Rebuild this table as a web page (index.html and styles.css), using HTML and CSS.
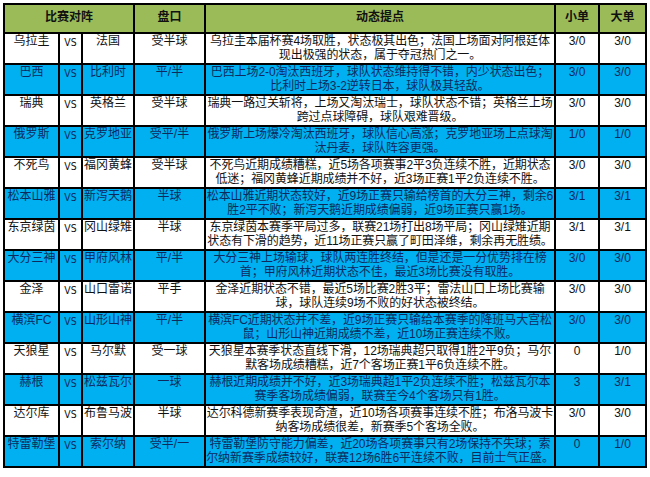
FILE: index.html
```html
<!DOCTYPE html>
<html lang="zh">
<head>
<meta charset="utf-8">
<title>比赛对阵</title>
<link rel="stylesheet" href="styles.css">
</head>
<body>
<table class="sheet">
  <colgroup>
    <col class="c-t1"><col class="c-vs"><col class="c-t2"><col class="c-pk"><col class="c-desc"><col class="c-s"><col class="c-b">
  </colgroup>
  <thead>
    <tr class="head">
      <th colspan="3">比赛对阵</th>
      <th>盘口</th>
      <th>动态提点</th>
      <th>小单</th>
      <th>大单</th>
    </tr>
  </thead>
  <tbody>
    <tr class="w">
      <td>乌拉圭</td><td class="vs">VS</td><td>法国</td><td>受半球</td>
      <td class="desc">乌拉圭本届杯赛4场取胜，状态极其出色；法国上场面对阿根廷体<br>现出极强的状态，属于夺冠热门之一。</td>
      <td>3/0</td><td>3/0</td>
    </tr>
    <tr class="b">
      <td>巴西</td><td class="vs">VS</td><td>比利时</td><td>平/半</td>
      <td class="desc">巴西上场2-0淘汰西班牙，球队状态维持得不错，内少状态出色；<br>比利时上场3-2逆转日本，球队极其轻敌。</td>
      <td>3/0</td><td>3/0</td>
    </tr>
    <tr class="w">
      <td>瑞典</td><td class="vs">VS</td><td>英格兰</td><td>受半球</td>
      <td class="desc">瑞典一路过关斩将，上场又淘汰瑞士，球队状态不错；英格兰上场<br>跨过点球障碍，球队艰难晋级。</td>
      <td>3/0</td><td>3/0</td>
    </tr>
    <tr class="b">
      <td>俄罗斯</td><td class="vs">VS</td><td>克罗地亚</td><td>受平/半</td>
      <td class="desc">俄罗斯上场爆冷淘汰西班牙，球队信心高涨；克罗地亚场上点球淘<br>汰丹麦，球队阵容更强。</td>
      <td>1/0</td><td>1/0</td>
    </tr>
    <tr class="w">
      <td>不死鸟</td><td class="vs">VS</td><td>福冈黄蜂</td><td>受半球</td>
      <td class="desc">不死鸟近期成绩糟糕，近5场各项赛事2平3负连续不胜，近期状态<br>低迷；福冈黄蜂近期成绩并不好，近3场正赛1平2负连续不胜。</td>
      <td>3/0</td><td>3/0</td>
    </tr>
    <tr class="b">
      <td>松本山雅</td><td class="vs">VS</td><td>新泻天鹅</td><td>半球</td>
      <td class="desc">松本山雅近期状态较好，近9场正赛只输给榜首的大分三神，剩余6<br>胜2平不败；新泻天鹅近期成绩偏弱，近9场正赛只赢1场。</td>
      <td>3/1</td><td>3/1</td>
    </tr>
    <tr class="w">
      <td>东京绿茵</td><td class="vs">VS</td><td>冈山绿雉</td><td>半球</td>
      <td class="desc">东京绿茵本赛季平局过多，联赛21场打出8场平局；冈山绿雉近期<br>状态有下滑的趋势，近11场正赛只赢了町田泽维，剩余再无胜绩。</td>
      <td>3/1</td><td>3/1</td>
    </tr>
    <tr class="b">
      <td>大分三神</td><td class="vs">VS</td><td>甲府风林</td><td>平/半</td>
      <td class="desc">大分三神上场输球，球队两连胜终结，但是还是一分优势排在榜<br>首；甲府风林近期状态不佳，最近3场比赛没有取胜。</td>
      <td>3/0</td><td>3/0</td>
    </tr>
    <tr class="w">
      <td>金泽</td><td class="vs">VS</td><td>山口雷诺</td><td>平手</td>
      <td class="desc">金泽近期状态不错，最近5场比赛2胜3平；雷法山口上场比赛输<br>球，球队连续9场不败的好状态被终结。</td>
      <td>3/0</td><td>3/0</td>
    </tr>
    <tr class="b">
      <td>横滨FC</td><td class="vs">VS</td><td>山形山神</td><td>平/半</td>
      <td class="desc">横滨FC近期状态并不差，近9场正赛只输给本赛季的降班马大宫松<br>鼠；山形山神近期成绩不差，近10场正赛连续不败。</td>
      <td>3/0</td><td>3/0</td>
    </tr>
    <tr class="w">
      <td>天狼星</td><td class="vs">VS</td><td>马尔默</td><td>受一球</td>
      <td class="desc">天狼星本赛季状态直线下滑，12场瑞典超只取得1胜2平9负；马尔<br>默客场成绩糟糕，近7个客场正赛1平6负连续不胜。</td>
      <td>0</td><td>1/0</td>
    </tr>
    <tr class="b">
      <td>赫根</td><td class="vs">VS</td><td>松兹瓦尔</td><td>一球</td>
      <td class="desc">赫根近期成绩并不好，近3场瑞典超1平2负连续不胜；松兹瓦尔本<br>赛季客场成绩偏弱，联赛至今4个客场只有1胜。</td>
      <td>3</td><td>3/1</td>
    </tr>
    <tr class="w">
      <td>达尔库</td><td class="vs">VS</td><td>布鲁马波</td><td>半球</td>
      <td class="desc">达尔科德新赛季表现奇渣，近10场各项赛事连续不胜；布洛马波卡<br>纳客场成绩很差，新赛季5个客场全败。</td>
      <td>3/0</td><td>3/0</td>
    </tr>
    <tr class="b">
      <td>特雷勒堡</td><td class="vs">VS</td><td>索尔纳</td><td>受半/一</td>
      <td class="desc">特雷勒堡防守能力偏差，近20场各项赛事只有2场保持不失球；索<br>尔纳新赛季成绩较好，联赛12场6胜6平连续不败，目前士气正盛。</td>
      <td>0</td><td>1/0</td>
    </tr>
  </tbody>
</table>
</body>
</html>
```

FILE: styles.css
```css
html, body {
  margin: 0;
  padding: 0;
  background: #ffffff;
}

body {
  padding: 3px 0 0 3px;
  font-family: "Liberation Sans", "Noto Sans CJK SC", sans-serif;
  font-size: 12px;
  color: #111111;
}

.sheet {
  border-collapse: collapse;
  table-layout: fixed;
  width: 642px;
  border: 2px solid #000;
}

.c-t1 { width: 55px; }
.c-vs { width: 23px; }
.c-t2 { width: 52px; }
.c-pk { width: 71px; }
.c-desc { width: 350px; }
.c-s { width: 44px; }
.c-b { width: 47px; }

.sheet th,
.sheet td {
  border: 2px solid #000;
  padding: 0;
  text-align: center;
  white-space: nowrap;
  overflow: hidden;
}

.head {
  height: 29px;
  background: #9bbb59;
}

.head th {
  font-weight: bold;
  font-size: 12px;
  line-height: 14px;
  vertical-align: middle;
  padding-bottom: 3px;
  color: #111;
}

tbody tr {
  height: 31px;
}

tbody td {
  vertical-align: top;
  line-height: 14px;
  padding-top: 1px;
}

tbody td.vs {
  font-size: 11px;
  font-family: "DejaVu Sans", sans-serif;
  transform: scaleX(0.85);
  padding-top: 2px;
}

tbody td.desc {
  letter-spacing: -0.1px;
}

tr.w {
  background: #ffffff;
  color: #111111;
}

tr.b {
  background: #00b0f0;
  color: #0c2a5e;
}
```
